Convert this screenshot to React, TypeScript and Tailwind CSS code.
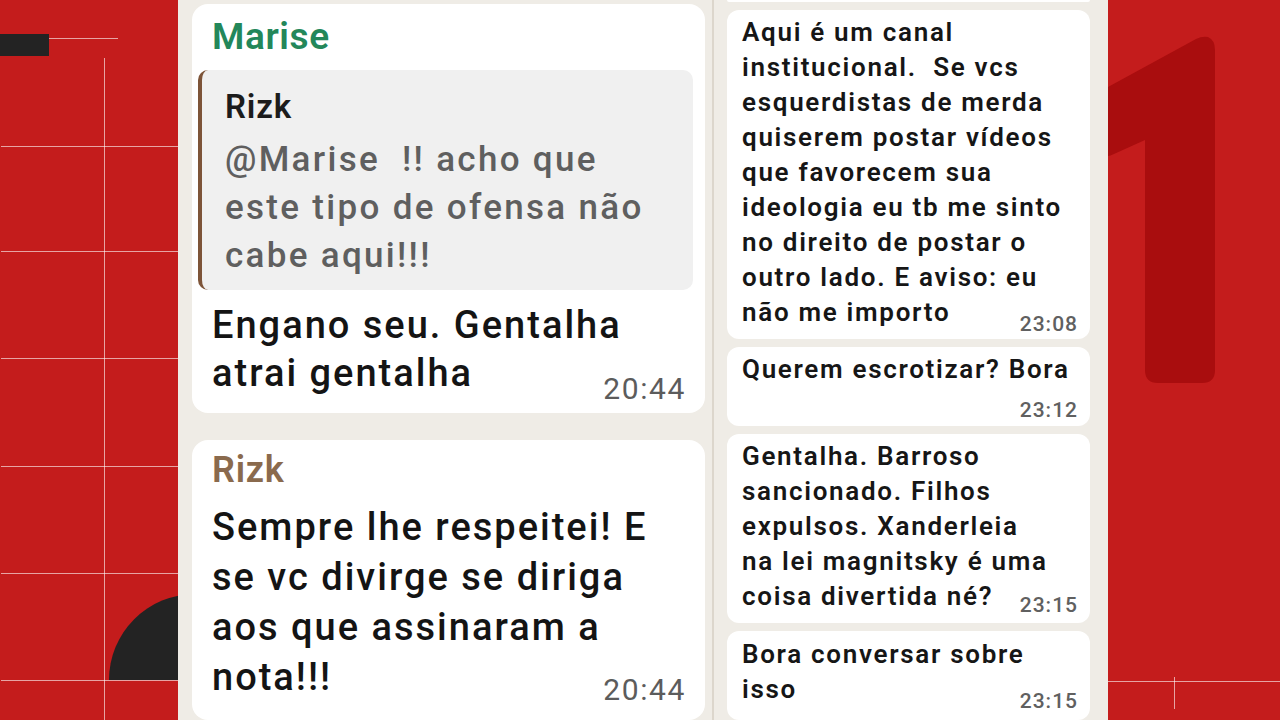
import * as React from 'react'

const font = { fontFamily: 'Roboto, "Liberation Sans", sans-serif' }

function Line({ children, className = '' }: { children: React.ReactNode; className?: string }) {
  return <div className={`whitespace-pre ${className}`}>{children}</div>
}

function LeftChat() {
  return (
    <div className="relative z-10 flex w-[534px] shrink-0 flex-col bg-[#efece6] pt-[4px] pl-[14px]">
      {/* Marise reply */}
      <div className="w-[513px] rounded-[16px] bg-white pt-[11px] pb-[6px] pl-[20px] pr-[19px]">
        <div className="text-[37px] leading-[44px] font-semibold tracking-[0.6px] text-[#23875a]">Marise</div>
        <div className="mt-[11px] -ml-[14px] mr-[-7px] rounded-[10px] border-l-[4px] border-[#7d5438] bg-[#f0f0f0] pt-[17px] pb-[10px] pl-[23px]">
          <div className="text-[33px] leading-[40px] font-semibold tracking-[0.8px] text-[#1c1c1c]">Rizk</div>
          <div className="mt-[9px] text-[35px] leading-[48px] font-medium tracking-[2.3px] text-[#5f5f5f]">
            <Line>@Marise  !! acho que</Line>
            <Line>este tipo de ofensa não</Line>
            <Line>cabe aqui!!!</Line>
          </div>
        </div>
        <div className="mt-[11px] text-[38px] leading-[48px] font-medium tracking-[2px] text-[#141414]">
          <Line>Engano seu. Gentalha</Line>
          <div className="flex items-start justify-between">
            <Line>atrai gentalha</Line>
            <span className="mt-[22px] text-[30px] leading-[36px] font-normal tracking-[1.6px] text-[#5c5c5c]">20:44</span>
          </div>
        </div>
      </div>

      {/* Rizk answer */}
      <div className="mt-[27px] w-[513px] rounded-[16px] bg-white pt-[9px] pb-[12px] pl-[20px] pr-[19px]">
        <div className="text-[36px] leading-[42px] font-semibold tracking-[0.8px] text-[#8a6a4d]">Rizk</div>
        <div className="mt-[11px] text-[38px] leading-[50px] font-medium tracking-[2px] text-[#141414]">
          <Line>Sempre lhe respeitei! E</Line>
          <Line>se vc divirge se diriga</Line>
          <Line>aos que assinaram a</Line>
          <div className="flex items-start justify-between">
            <Line>nota!!!</Line>
            <span className="mt-[20px] text-[30px] leading-[36px] font-normal tracking-[1.6px] text-[#5c5c5c]">20:44</span>
          </div>
        </div>
      </div>
    </div>
  )
}

function Bubble({
  lines,
  time,
  pt,
  pb,
  timeMt,
  ownRow = false,
}: {
  lines: string[]
  time: string
  pt: string
  pb: string
  timeMt: string
  ownRow?: boolean
}) {
  const last = lines[lines.length - 1]
  return (
    <div className={`w-[363px] rounded-[12px] bg-white pl-[15px] pr-[12px] ${pt} ${pb}`}>
      <div className="text-[26px] leading-[35px] font-semibold tracking-[1.7px] text-[#161616]">
        {lines.slice(0, -1).map((l) => (
          <Line key={l}>{l}</Line>
        ))}
        {ownRow ? (
          <>
            <Line>{last}</Line>
            <div className="flex justify-end">
              <span className={`text-[21px] leading-[26px] font-medium tracking-[1px] text-[#606060] ${timeMt}`}>{time}</span>
            </div>
          </>
        ) : (
          <div className="flex items-start justify-between">
            <Line>{last}</Line>
            <span className={`text-[21px] leading-[26px] font-medium tracking-[1px] text-[#606060] ${timeMt}`}>{time}</span>
          </div>
        )}
      </div>
    </div>
  )
}

function RightChat() {
  return (
    <div className="flex w-[394px] shrink-0 flex-col gap-[8px] bg-[#efece6] pl-[13px]">
      <div className="h-[4px] w-[363px] rounded-b-[10px] bg-white" />
      <Bubble
        pt="pt-[5px]"
        pb="pb-[2px]"
        timeMt="mt-[16px]"
        time="23:08"
        lines={[
          'Aqui é um canal',
          'institucional.  Se vcs',
          'esquerdistas de merda',
          'quiserem postar vídeos',
          'que favorecem sua',
          'ideologia eu tb me sinto',
          'no direito de postar o',
          'outro lado. E aviso: eu',
          'não me importo',
        ]}
      />
      <Bubble pt="pt-[5px]" pb="pb-[3px]" timeMt="mt-[10px]" time="23:12" ownRow lines={['Querem escrotizar? Bora']} />
      <Bubble
        pt="pt-[5px]"
        pb="pb-[5px]"
        timeMt="mt-[13px]"
        time="23:15"
        lines={[
          'Gentalha. Barroso',
          'sancionado. Filhos',
          'expulsos. Xanderleia',
          'na lei magnitsky é uma',
          'coisa divertida né?',
        ]}
      />
      <Bubble pt="pt-[6px]" pb="pb-[6px]" timeMt="mt-[16px]" time="23:15" lines={['Bora conversar sobre', 'isso']} />
    </div>
  )
}

export default function App() {
  return (
    <div className="flex h-[720px] w-[1280px] overflow-hidden bg-[#c41c1c]" style={font}>
      {/* left decoration */}
      <div className="relative w-[178px] shrink-0">
        <div className="absolute left-0 top-[34px] h-[22px] w-[49px] bg-[#232323]" />
        <div className="absolute left-[49px] top-[38px] h-px w-[69px] bg-white/60" />
        <div className="absolute left-[104px] top-[58px] h-[662px] w-px bg-white/60" />
        <div className="absolute left-px top-[146px] h-px w-[177px] bg-white/60" />
        <div className="absolute left-px top-[251px] h-px w-[177px] bg-white/60" />
        <div className="absolute left-px top-[358px] h-px w-[177px] bg-white/60" />
        <div className="absolute left-px top-[466px] h-px w-[177px] bg-white/60" />
        <div className="absolute left-px top-[573px] h-px w-[177px] bg-white/60" />
        <div className="absolute left-px top-[680px] h-px w-[177px] bg-white/60" />
        <div className="absolute left-[109px] top-[594px] h-[86px] w-[172px] rounded-t-full bg-[#232323]" />
      </div>

      <LeftChat />
      <div className="w-[2px] shrink-0 bg-[#dcd6cc]" />
      <RightChat />

      {/* right decoration */}
      <div className="relative flex-1">
        <svg className="absolute left-0 top-0" width="172" height="400" viewBox="0 0 172 400">
          <path
            d="M0 87 L88 39 Q94 36 100 37 Q107 40 107 50 L107 370 Q107 383 94 383 L50 383 Q37 383 37 370 L37 140 L6 154 Q2 156 0 156 Z"
            fill="#a90d0e"
          />
        </svg>
        <div className="absolute left-0 top-[681px] h-px w-full bg-white/60" />
        <div className="absolute left-[66px] top-[677px] h-[32px] w-px bg-white/60" />
      </div>
    </div>
  )
}
